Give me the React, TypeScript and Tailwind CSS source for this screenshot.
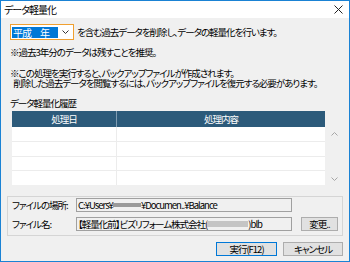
const Chevron = ({ up, className }: { up?: boolean; className?: string }) => (
  <svg width="7" height="4" viewBox="0 0 7 4" className={className}>
    <polyline
      points={up ? '0.5,3.5 3.5,0.5 6.5,3.5' : '0.5,0.5 3.5,3.5 6.5,0.5'}
      fill="none"
      stroke="currentColor"
      strokeWidth="1"
    />
  </svg>
)

const rowHeights = ['h-[15px]', 'h-[15px]', 'h-[14px]', 'h-[14px]']

export default function App() {
  return (
    <div className="w-[350px] h-[262px] border border-[#1a82d4] flex flex-col overflow-hidden text-black text-[9.5px] leading-[10px] tracking-[-1px] font-['Noto_Sans_CJK_JP','Noto_Sans',sans-serif] [font-feature-settings:'palt']">
      {/* title bar */}
      <div className="h-[17px] bg-white flex items-center justify-between pl-[3px] pr-[6px]">
        <span className="text-[10px]">データ軽量化</span>
        <svg width="9" height="9" viewBox="0 0 9 9" className="text-[#222]">
          <path d="M0.5 0.5 L8.5 8.5 M8.5 0.5 L0.5 8.5" stroke="currentColor" strokeWidth="1" />
        </svg>
      </div>

      <div className="flex-1 bg-[#f0f0f0] flex flex-col px-[6px]">
        {/* era select */}
        <div className="mt-[6px] flex items-center">
          <div className="ml-[3px] w-[64px] h-[16px] border border-[#f0a030] bg-white flex items-center px-[1px]">
            <span className="bg-[#0078d7] text-white text-[10px] h-[11px] w-[46px] leading-[11px] pl-[1px] whitespace-pre">平成　年</span>
            <Chevron className="ml-auto mr-[3px] text-[#333]" />
          </div>
          <span className="ml-[3px] whitespace-nowrap">を含む過去データを削除し、データの軽量化を行います。</span>
        </div>

        <p className="mt-[7px] ml-[3px]">※過去3年分のデータは残すことを推奨。</p>

        <div className="mt-[11px] ml-[3px] whitespace-pre">
          <p>※この処理を実行すると、バックアップファイルが作成されます。</p>
          <p className="pl-[2px]"> 削除した過去データを閲覧するには、バックアップファイルを復元する必要があります。</p>
        </div>

        <p className="mt-[10px] ml-[3px]">データ軽量化履歴</p>

        {/* history list */}
        <div className="mt-[3px] ml-[5px] flex">
          <div className="w-[313px] flex flex-col">
            <div className="h-[16px] bg-[#2c5a7a] text-white flex">
              <div className="w-[105px] border-r border-[#7f9cb2] flex items-center justify-center">処理日</div>
              <div className="flex-1 flex items-center justify-center">処理内容</div>
            </div>
            {rowHeights.map((h, i) => (
              <div key={i} className={`${h} bg-white flex ${i < 3 ? 'border-b border-[#ececec]' : ''}`}>
                <div className="w-[105px] border-r border-[#ececec]" />
                <div className="flex-1" />
              </div>
            ))}
          </div>
          <div className="w-[18px] mt-[16px] flex flex-col justify-between items-center pt-[5px] pb-[4px] text-[#a6a6a6]">
            <Chevron up />
            <Chevron />
          </div>
        </div>

        {/* file info */}
        <div className="mt-[11px] h-[40px] border border-[#d5d5d5] flex flex-col pt-[1px]">
          <div className="flex items-center h-[14px]">
            <span className="w-[68px] pl-[4px] whitespace-nowrap">ファイルの場所:</span>
            <div className="w-[216px] h-[14px] border border-[#a0a0a0] px-[1px] flex items-center whitespace-pre">
              C:¥Users¥<span className="inline-block w-[28px] h-[4px] bg-[#9a9a9a]" />¥Documen..¥Balance
            </div>
          </div>
          <div className="flex items-center h-[14px] mt-[5px]">
            <span className="w-[68px] pl-[4px] whitespace-nowrap">ファイル名:</span>
            <div className="w-[216px] h-[14px] border border-[#a0a0a0] px-[1px] flex items-center whitespace-pre">
              【軽量化前】ビズリフォーム株式会社(<span className="inline-block w-[41px] h-[6px] bg-[#c4c4c4]" />)blb
            </div>
            <button className="ml-[9px] w-[37px] h-[14px] border border-[#adadad] bg-[#e1e1e1] flex items-center justify-center">
              変更..
            </button>
          </div>
        </div>

        <div className="mt-[6px] flex justify-end gap-[6px]">
          <button className="w-[61px] h-[14px] border border-[#0078d7] bg-[#e1e1e1] flex items-center justify-center">
            実行(F12)
          </button>
          <button className="w-[60px] h-[14px] border border-[#adadad] bg-[#e1e1e1] flex items-center justify-center">
            キャンセル
          </button>
        </div>
      </div>
    </div>
  )
}
